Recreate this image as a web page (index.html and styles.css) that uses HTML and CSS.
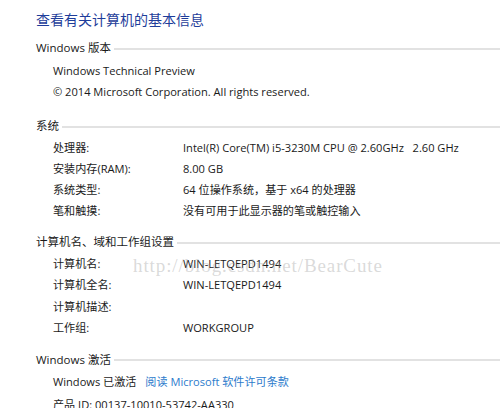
FILE: index.html
```html
<!DOCTYPE html>
<html lang="zh-CN">

<head>
    <meta charset="UTF-8">
    <title>系统</title>
    <link rel="stylesheet" href="styles.css">
</head>

<body>
    <div class="page">
        <h1 class="title">查看有关计算机的基本信息</h1>

        <section class="section edition">
            <div class="section-head"><span>Windows 版本</span></div>
            <div class="rows">
                <div class="row">Windows Technical Preview</div>
                <div class="row">© 2014 Microsoft Corporation. All rights reserved.</div>
            </div>
        </section>

        <section class="section">
            <div class="section-head"><span>系统</span></div>
            <div class="rows">
                <div class="row"><span class="label">处理器:</span><span class="value">Intel(R) Core(TM) i5-3230M CPU @ 2.60GHz&nbsp;&nbsp;&nbsp;2.60 GHz</span></div>
                <div class="row"><span class="label">安装内存(RAM):</span><span class="value">8.00 GB</span></div>
                <div class="row"><span class="label">系统类型:</span><span class="value">64 位操作系统，基于 x64 的处理器</span></div>
                <div class="row"><span class="label">笔和触摸:</span><span class="value">没有可用于此显示器的笔或触控输入</span></div>
            </div>
        </section>

        <section class="section computer">
            <div class="section-head"><span>计算机名、域和工作组设置</span></div>
            <div class="rows">
                <div class="row"><span class="label">计算机名:</span><span class="value">WIN-LETQEPD1494</span></div>
                <div class="row"><span class="label">计算机全名:</span><span class="value">WIN-LETQEPD1494</span></div>
                <div class="row"><span class="label">计算机描述:</span><span class="value"></span></div>
                <div class="row"><span class="label">工作组:</span><span class="value">WORKGROUP</span></div>
            </div>
        </section>

        <section class="section activation">
            <div class="section-head"><span>Windows 激活</span></div>
            <div class="rows">
                <div class="row">Windows 已激活<a class="link" href="#">阅读 Microsoft 软件许可条款</a></div>
                <div class="row product">产品 ID: 00137-10010-53742-AA330</div>
            </div>
        </section>

        <div class="watermark">http://blog.csdn.net/BearCute</div>
    </div>
</body>

</html>
```

FILE: styles.css
```css
:root {
    --title-color: #1e3d9a;
    --link-color: #2c7bcc;
    --text-color: #1a1a1a;
    --rule-color: #e2e2e2;
}

* {
    box-sizing: border-box;
    margin: 0;
    padding: 0;
}

body {
    font-family: "Open Sans", "Noto Sans CJK SC", sans-serif;
    font-size: 11.1px;
    color: var(--text-color);
    background: #ffffff;
    overflow: hidden;
}

.page {
    position: relative;
    padding: 7px 0 0 36px;
}

.title {
    font-family: "Noto Sans CJK SC", sans-serif;
    font-size: 14px;
    font-weight: normal;
    line-height: 24px;
    color: var(--title-color);
    margin-bottom: 6px;
}

.section {
    margin-bottom: 10px;
}

.edition .rows {
    padding-top: 3px;
    padding-bottom: 3px;
}

.computer .row {
    height: 21.4px;
    line-height: 21.4px;
}

.activation {
    margin-top: 2px;
}

.section-head {
    display: flex;
    align-items: center;
    height: 20px;
    font-size: 11.5px;
}

.section-head::after {
    content: "";
    flex: 1;
    height: 2px;
    margin-left: 3px;
    margin-top: 3px;
    background: var(--rule-color);
}

.rows {
    padding: 2px 0 0 17px;
}

.row {
    display: flex;
    height: 21px;
    line-height: 21px;
    white-space: nowrap;
}

.row.product {
    margin-top: 2px;
}

.label {
    width: 130px;
    flex-shrink: 0;
}

.link {
    color: var(--link-color);
    text-decoration: none;
    margin-left: 9px;
}

.watermark {
    position: absolute;
    left: 133px;
    top: 255px;
    font-family: "Liberation Serif", serif;
    font-size: 19px;
    color: rgba(160, 160, 160, 0.4);
    letter-spacing: 0.9px;
    pointer-events: none;
}
```
